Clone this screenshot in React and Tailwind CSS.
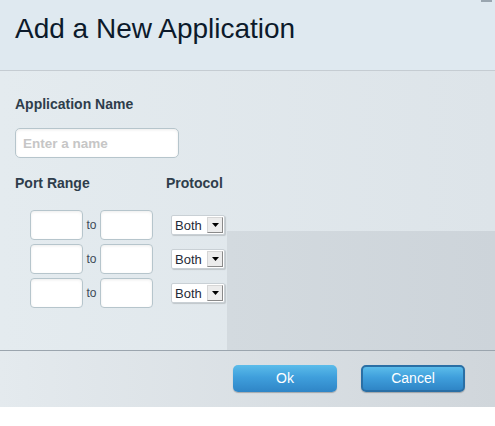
import React from "react";

function PortRow() {
  return (
    <div className="flex items-center h-[30px]">
      <input className="w-[53px] h-[30px] rounded-[4px] border border-[#b6c5cc] bg-white shadow-[inset_0_1px_3px_rgba(0,0,0,0.08)] outline-none" />
      <span className="w-[17px] text-center text-[12px] text-[#3d4b58]">to</span>
      <input className="w-[53px] h-[30px] rounded-[4px] border border-[#b6c5cc] bg-white shadow-[inset_0_1px_3px_rgba(0,0,0,0.08)] outline-none" />
      <div className="ml-[18px] flex items-center h-[20px] w-[54px] bg-white border border-[#c9d0d5] rounded-[2px] shadow-[1px_1px_1px_rgba(0,0,0,0.15)]">
        <span className="flex-1 pl-[3px] text-[13px] leading-none text-[#1f2b38]">Both</span>
        <div className="w-[16px] h-[16px] mr-[1px] bg-[#ececec] border border-[#d6d6d6] border-r-[#8a8a8a] border-b-[#8a8a8a] flex items-center justify-center">
          <svg width="7" height="4" viewBox="0 0 7 4"><path d="M0 0H7L3.5 4Z" fill="#000" /></svg>
        </div>
      </div>
    </div>
  );
}

export default function App() {
  return (
    <div className="w-[495px] h-[426px] bg-white flex flex-col" style={{ fontFamily: '"Liberation Sans", Arial, sans-serif' }}>
      <div className="relative h-[71px] bg-[#dfe9f0] border-b border-[#c5ccd2] pl-[15px] pt-[13px] shrink-0">
        <h1 className="text-[28px] leading-[32px] text-[#0c1a2b]">Add a New Application</h1>
        <div className="absolute right-[3px] top-0 w-[11px] h-[2px] bg-[#9aa6b0]" />
      </div>
      <div className="relative h-[280px] shrink-0 bg-[linear-gradient(90deg,#e4ebef_0%,#dde4e9_100%)] border-b border-[#9ba5ae]">
        <div className="absolute left-[227px] top-[160px] right-0 bottom-0 bg-[linear-gradient(90deg,#d3dadf,#cdd4da)]" />
        <div className="relative pl-[15px] pt-[25px] flex flex-col">
          <div className="text-[14px] font-bold text-[#2e3d4b] leading-[16px]">Application Name</div>
          <input
            placeholder="Enter a name"
            className="mt-[16px] w-[164px] h-[30px] rounded-[5px] border border-[#b6c5cc] bg-white px-[7px] text-[13.5px] font-bold placeholder:text-[#c6c6c6] shadow-[inset_0_1px_3px_rgba(0,0,0,0.08)] outline-none"
          />
          <div className="mt-[17px] flex text-[14px] font-bold text-[#2e3d4b] leading-[16px]">
            <span className="w-[151px]">Port Range</span>
            <span>Protocol</span>
          </div>
          <div className="mt-[19px] pl-[15px] flex flex-col gap-[4px]">
            <PortRow />
            <PortRow />
            <PortRow />
          </div>
        </div>
      </div>
      <div className="h-[56px] shrink-0 bg-[linear-gradient(90deg,#e4eaee_0%,#d0d6db_100%)] flex items-start pt-[14px] pl-[233px] gap-[24px]">
        <button className="w-[104px] h-[27px] rounded-[5px] bg-[linear-gradient(180deg,#5bbcea_0%,#3f9fdc_45%,#2f85c6_100%)] text-white text-[14px] shadow-[0_1px_1px_rgba(0,0,0,0.25)]">Ok</button>
        <button className="w-[104px] h-[27px] rounded-[5px] bg-[linear-gradient(180deg,#5bbcea_0%,#3f9fdc_45%,#2f85c6_100%)] text-white text-[14px] border-2 border-[#2a6fa5] shadow-[0_1px_1px_rgba(0,0,0,0.25)]">Cancel</button>
      </div>
      <div className="flex-1 bg-white" />
    </div>
  );
}
